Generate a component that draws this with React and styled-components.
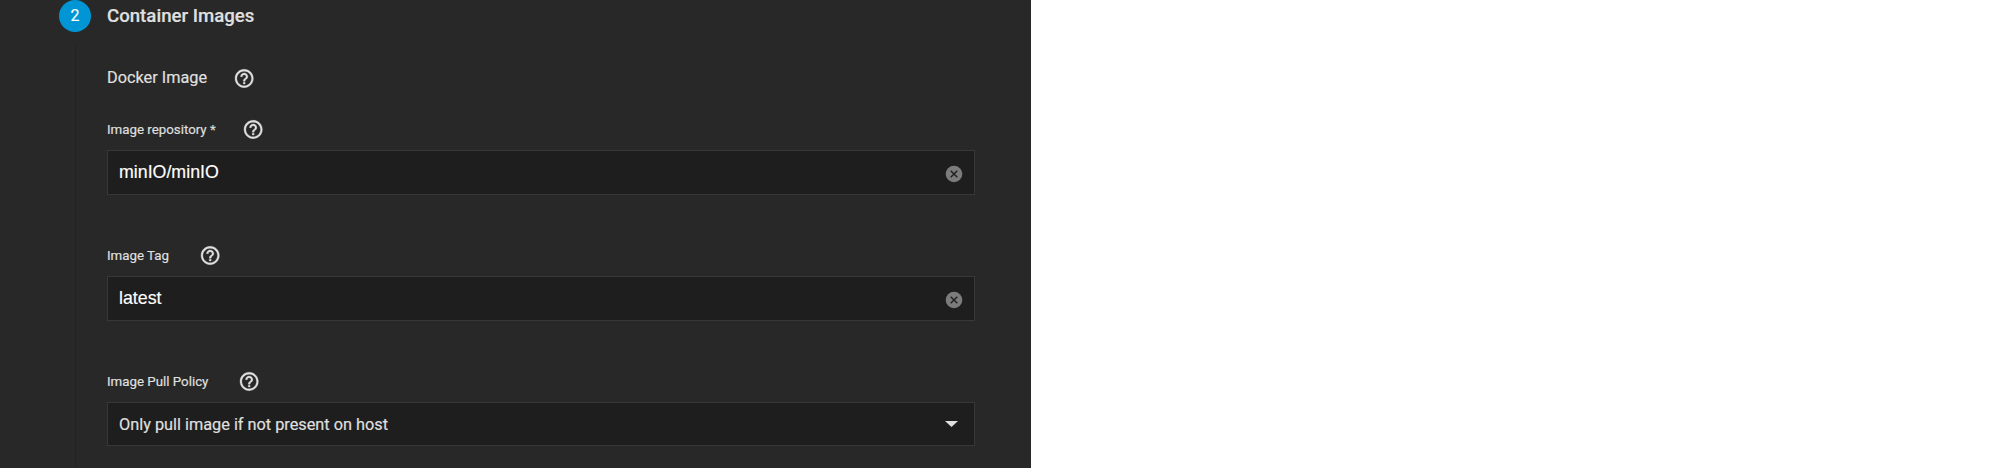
import React from "react";
import styled, { createGlobalStyle } from "styled-components";

const GlobalStyle = createGlobalStyle`
  body { margin: 0; background: #fff; }
  * { box-sizing: border-box; }
`;

const Panel = styled.main`
  display: flex;
  width: 1031px;
  height: 468px;
  overflow: hidden;
  padding-left: 59px;
  background: #282828;
  color: #e0e0e0;
  font-family: Roboto, sans-serif;
  -webkit-text-stroke: 0.15px;
`;

const StepRail = styled.div`
  display: flex;
  flex-direction: column;
  gap: 11px;
  width: 32px;
  margin-right: 16px;
`;

const StepNumber = styled.div`
  width: 32px;
  height: 32px;
  flex: none;
  border-radius: 50%;
  background: #0095d5;
  color: #fff;
  font-size: 16px;
  line-height: 32px;
  text-align: center;
`;

const StepLine = styled.div`
  flex: 1;
  width: 1px;
  margin-left: 16px;
  background: #232323;
`;

const StepContent = styled.section`
  display: flex;
  flex-direction: column;
  width: 868px;
`;

const StepTitle = styled.h2`
  margin: 0;
  height: 32px;
  font-size: 18.65px;
  font-weight: 500;
  line-height: 32px;
`;

const LabelRow = styled.div`
  display: flex;
  align-items: center;
  gap: ${(p) => p.$gap}px;
  height: 22px;
  margin-top: ${(p) => p.$top}px;
`;

const GroupName = styled.span`
  font-size: 16.3px;
  line-height: 20px;
`;

const FieldLabel = styled.label`
  font-size: 13.3px;
  line-height: 20px;
  padding-top: 2px;
`;

const Field = styled.div`
  display: flex;
  align-items: center;
  justify-content: space-between;
  height: ${(p) => p.$height}px;
  margin-top: ${(p) => p.$top}px;
  padding: 0 ${(p) => p.$end}px 0 11px;
  border: 1px solid #383838;
  background: #1e1e1e;
`;

const InputText = styled.span`
  color: #fff;
  font: 17.8px/22px "Liberation Sans", Arial, sans-serif;
  padding-bottom: 2px;
`;

const SelectText = styled.span`
  font-size: 16.3px;
  line-height: 22px;
  padding-top: 2px;
`;

const Icon = styled.svg`
  display: block;
  flex: none;
  margin-top: ${(p) => p.$drop || 0}px;
`;

const HelpIcon = () => (
  <Icon width="22" height="22" viewBox="-0.2 -0.5 24 24" fill="#e0e0e0" stroke="#e0e0e0" strokeWidth="0.35">
    <path d="M11 18h2v-2h-2v2zm1-16C6.48 2 2 6.48 2 12s4.48 10 10 10 10-4.48 10-10S17.52 2 12 2zm0 18c-4.41 0-8-3.59-8-8s3.59-8 8-8 8 3.59 8 8-3.59 8-8 8zm0-14c-2.21 0-4 1.79-4 4h2c0-1.1.9-2 2-2s2 .9 2 2c0 2-3 1.75-3 5h2c0-2.25 3-2.5 3-5 0-2.21-1.79-4-4-4z" />
  </Icon>
);

const ClearIcon = () => (
  <Icon $drop={2} width="18" height="18" viewBox="0 0 18 18">
    <circle cx="9" cy="9" r="8.3" fill="#7c7c7c" />
    <path d="M5.7 5.7l6.6 6.6M12.3 5.7l-6.6 6.6" stroke="#222" strokeWidth="1.5" />
  </Icon>
);

const Caret = () => (
  <Icon width="13" height="6" viewBox="0 0 13 6">
    <path d="M0 0h13L6.5 6z" fill="#e0e0e0" />
  </Icon>
);

export default function App() {
  return (
    <>
      <GlobalStyle />
      <Panel>
        <StepRail>
          <StepNumber>2</StepNumber>
          <StepLine />
        </StepRail>
        <StepContent>
          <StepTitle>Container Images</StepTitle>
          <LabelRow $top={35} $gap={26}>
            <GroupName>Docker Image</GroupName>
            <HelpIcon />
          </LabelRow>
          <LabelRow $top={29} $gap={26}>
            <FieldLabel>Image repository *</FieldLabel>
            <HelpIcon />
          </LabelRow>
          <Field $top={10} $height={45} $end={11}>
            <InputText>minIO/minIO</InputText>
            <ClearIcon />
          </Field>
          <LabelRow $top={49} $gap={30}>
            <FieldLabel>Image Tag</FieldLabel>
            <HelpIcon />
          </LabelRow>
          <Field $top={10} $height={45} $end={11}>
            <InputText>latest</InputText>
            <ClearIcon />
          </Field>
          <LabelRow $top={49} $gap={30}>
            <FieldLabel>Image Pull Policy</FieldLabel>
            <HelpIcon />
          </LabelRow>
          <Field $top={10} $height={44} $end={16}>
            <SelectText>Only pull image if not present on host</SelectText>
            <Caret />
          </Field>
        </StepContent>
      </Panel>
    </>
  );
}
